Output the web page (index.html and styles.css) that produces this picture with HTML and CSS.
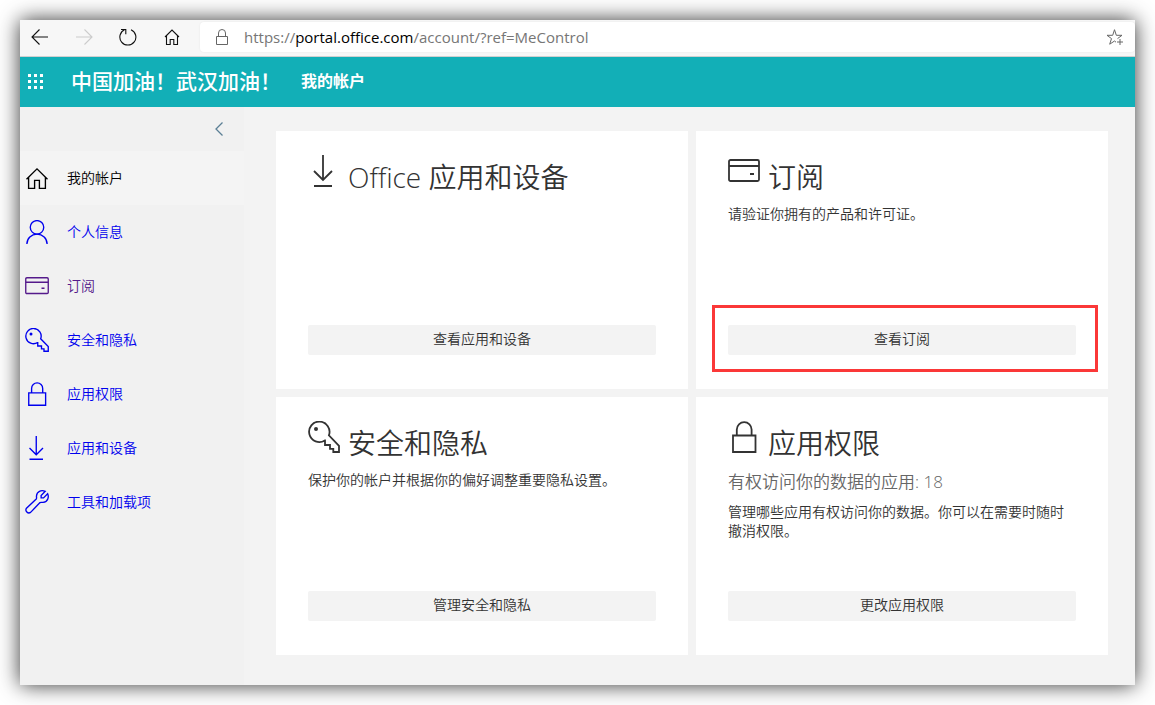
FILE: index.html
```html
<!DOCTYPE html>
<html lang="zh-CN">
<head>
<meta charset="utf-8">
<meta name="viewport" content="width=device-width, initial-scale=1">
<title>我的帐户</title>
<link rel="stylesheet" href="styles.css">
</head>
<body>
<svg class="sprite" aria-hidden="true">
  <symbol id="home" viewBox="0 0 32 32"><path d="M2 17.8 16 3.8l14 14M4.8 15v14.8h8V19.2h6.4v10.6h8V15"/></symbol>
  <symbol id="person" viewBox="0 0 32 32"><circle cx="16" cy="9.8" r="9"/><path d="M2.5 32c0-7.5 6-13.2 13.5-13.2S29.500 24.500 29.500 32"/></symbol>
  <symbol id="card" viewBox="0 0 32 32"><rect x="1" y="5" width="30" height="21" rx="1.500"/><path d="M1 11h30M22 19h4"/></symbol>
  <symbol id="key" viewBox="0 0 32 32"><path d="M16.800 19.400A10.200 10.200 0 1 1 20.900 14.300L31 24.800V31H25.300V27.800H22V24H17V19.400Z"/><circle class="dot" cx="8" cy="8" r="2"/></symbol>
  <symbol id="lock" viewBox="0 0 32 32"><path d="M5 14.500h22.500V31H5zM8.800 14.500V8.500a7.400 7.400 0 0 1 14.800 0v6"/></symbol>
  <symbol id="download" viewBox="0 0 32 32"><path d="M15 0v25M6 16l9 9 9-9M6 31h18"/></symbol>
  <symbol id="wrench" viewBox="0 0 32 32"><path d="M27 1.800 21.500 7.300v3.200h3.200L30.200 5c1.800 4 .8 11-6.200 11.500-1.500.1-3-.5-4 .3L7.500 29.800A4 4 0 0 1 2 24.200L15 12c.8-1 .2-2.500.3-4C15.800 2 21.500-.5 27 1.800Z"/></symbol>
</svg>
<div class="window">
  <div class="toolbar">
    <div class="tools">
      <button class="tool" aria-label="后退"><svg viewBox="0 0 18 18"><path d="M17 9H1M8.500 1.500 1 9l7.500 7.500"/></svg></button>
      <button class="tool" aria-label="前进" disabled><svg viewBox="0 0 18 18"><path d="M1 9h16M9.500 1.500 17 9l-7.500 7.500"/></svg></button>
      <button class="tool" aria-label="刷新"><svg viewBox="0 0 18 18"><path d="M12 1.700A8 8 0 1 1 5.500 1.800M2 1.500h4.800v4.800"/></svg></button>
      <button class="tool" aria-label="主页"><svg viewBox="0 0 18 18"><path d="M2 9 9 2l7 7M3.500 7.800v8.700h3.700v-5h3.600v5h3.700V7.800"/></svg></button>
    </div>
    <div class="address">
      <svg class="address-lock" viewBox="0 0 14 18" aria-hidden="true"><path d="M1.500 8.500h11v8h-11zM3.500 8.500V5a3.500 3.500 0 0 1 7 0v3.500"/></svg>
      <div class="url" role="textbox" contenteditable="true" spellcheck="false" aria-label="地址">https://<span class="host">portal.office.com</span>/account/?ref=MeControl</div>
      <button class="favorite" aria-label="添加到收藏夹"><svg viewBox="0 0 18 18"><path d="M10 14.200 8.500 13l-4.800 3.200 1.800-5.600L1 7.300h5.700L8.500 1.700l1.800 5.600H16l-4.500 3.300M14 11v6M11 14h6"/></svg></button>
    </div>
  </div>
  <header class="header">
    <button class="waffle" aria-label="应用启动器"><svg viewBox="0 0 15 15"><path d="M0 0h3v3H0zM6 0h3v3H6zM12 0h3v3h-3zM0 6h3v3H0zM6 6h3v3H6zM12 6h3v3h-3zM0 12h3v3H0zM6 12h3v3H6zM12 12h3v3h-3z"/></svg></button>
    <span class="brand">中国加油！武汉加油！</span>
    <span class="app-name">我的帐户</span>
  </header>
  <div class="body">
    <nav class="sidebar" aria-label="帐户">
      <button class="collapse" aria-label="折叠"><svg viewBox="0 0 10 16"><path d="M8.500 1.500 2 8l6.500 6.500"/></svg></button>
      <a class="item current" href="#" aria-current="page"><svg class="icon"><use href="#home"/></svg>我的帐户</a>
      <a class="item" href="#"><svg class="icon"><use href="#person"/></svg>个人信息</a>
      <a class="item visited" href="#"><svg class="icon"><use href="#card"/></svg>订阅</a>
      <a class="item" href="#"><svg class="icon"><use href="#key"/></svg>安全和隐私</a>
      <a class="item" href="#"><svg class="icon"><use href="#lock"/></svg>应用权限</a>
      <a class="item" href="#"><svg class="icon"><use href="#download"/></svg>应用和设备</a>
      <a class="item" href="#"><svg class="icon"><use href="#wrench"/></svg>工具和加载项</a>
    </nav>
    <main class="cards">
      <section class="card">
        <h2 class="title"><svg class="icon"><use href="#download"/></svg><span><span class="latin">Office</span> 应用和设备</span></h2>
        <div class="action"><button class="action-button">查看应用和设备</button></div>
      </section>
      <section class="card">
        <h2 class="title"><svg class="icon"><use href="#card"/></svg><span>订阅</span></h2>
        <p class="text">请验证你拥有的产品和许可证。</p>
        <div class="action highlighted"><button class="action-button">查看订阅</button></div>
      </section>
      <section class="card">
        <h2 class="title"><svg class="icon"><use href="#key"/></svg><span>安全和隐私</span></h2>
        <p class="text">保护你的帐户并根据你的偏好调整重要隐私设置。</p>
        <div class="action"><button class="action-button">管理安全和隐私</button></div>
      </section>
      <section class="card">
        <h2 class="title"><svg class="icon"><use href="#lock"/></svg><span>应用权限</span></h2>
        <p class="subtitle">有权访问你的数据的应用: 18</p>
        <p class="text">管理哪些应用有权访问你的数据。你可以在需要时随时撤消权限。</p>
        <div class="action"><button class="action-button">更改应用权限</button></div>
      </section>
    </main>
  </div>
</div>
</body>
</html>
```
FILE: styles.css
```css
* { box-sizing: border-box; }

body {
  margin: 0;
  min-height: 100vh;
  padding: 20px;
  display: flex;
  background: #fff;
  color: #333;
  font: 350 14px/20px "Open Sans", "Noto Sans CJK SC", sans-serif;
}

button {
  margin: 0;
  padding: 0;
  border: 0;
  background: none;
  color: inherit;
  font: inherit;
}

svg {
  display: block;
  fill: none;
  stroke: currentColor;
}

.sprite {
  position: absolute;
  width: 0;
  height: 0;
}

.window {
  flex: 1;
  display: flex;
  flex-direction: column;
  background: #f3f3f3;
  box-shadow: 0 0 20px rgba(0, 0, 0, 0.8);
}

/* Browser toolbar */
.toolbar {
  display: flex;
  gap: 8px;
  padding: 2px 0 4px;
  background: #f7f7f7;
  border-bottom: 1px solid #d0d0d0;
}

.tools {
  display: flex;
  gap: 4px;
}

.tool {
  width: 40px;
  display: grid;
  place-items: center;
  color: #111;
}

.tool:disabled { color: #ccc; }

.tool svg {
  width: 18px;
  height: 18px;
  stroke-width: 1.1;
}

.address {
  flex: 1;
  display: flex;
  align-items: center;
  padding: 0 11px 0 15px;
  background: #fff;
  border-radius: 4px;
  box-shadow: 0 0 2px rgba(0, 0, 0, 0.08);
}

.address-lock {
  width: 14px;
  height: 18px;
  color: #666;
}

.url {
  flex: 1;
  padding-left: 15px;
  color: #767676;
  font-size: 15px;
  font-weight: 400;
  line-height: 30px;
  outline: 0;
}

.host { color: #000; }

.favorite {
  color: #666;
}

.favorite svg {
  width: 18px;
  height: 18px;
}

/* Site header */
.header {
  display: flex;
  align-items: center;
  height: 50px;
  padding: 0 8px 2px;
  background: #12afb7;
  color: #fff;
}

.waffle svg {
  width: 15px;
  height: 15px;
  fill: currentColor;
  stroke: none;
}

.brand {
  width: 230px;
  margin-left: 28px;
  font-size: 21px;
  font-weight: 500;
  white-space: nowrap;
}

.app-name {
  font-size: 16px;
  font-weight: 700;
}

.body {
  flex: 1;
  display: flex;
}

/* Sidebar */
.sidebar {
  width: 224px;
  display: flex;
  flex-direction: column;
  background: #f1f1f1;
}

.collapse {
  height: 44px;
  display: flex;
  align-items: center;
  justify-content: flex-end;
  padding-right: 20px;
  color: #5b7f95;
}

.collapse svg {
  width: 10px;
  height: 16px;
  stroke-width: 1.3;
}

.item {
  display: flex;
  align-items: center;
  gap: 18px;
  height: 54px;
  padding: 0 5px;
  color: #00e;
  text-decoration: none;
}

.item .icon {
  width: 24px;
  height: 24px;
}

.icon {
  flex: none;
  overflow: visible;
  stroke-width: 1.8;
}

.dot {
  fill: currentColor;
  stroke: none;
}

.current {
  background: #f4f4f4;
  color: #000;
}

.visited { color: #551a8b; }

/* Cards */
.cards {
  flex: 1;
  display: grid;
  grid-template-columns: 1fr 1fr;
  grid-auto-rows: minmax(258px, auto);
  align-content: start;
  gap: 8px;
  padding: 24px 27px 30px 32px;
}

.card {
  display: flex;
  flex-direction: column;
  padding: 24px 32px 34px;
  background: #fff;
}

.title {
  display: flex;
  align-items: flex-start;
  gap: 8px;
  margin: 0;
  font-size: 28px;
  font-weight: 350;
  line-height: 44px;
}

.latin { font-weight: 300; }

.title .icon {
  width: 32px;
  height: 32px;
}

.subtitle {
  margin: 5px 0 3px;
  color: #666;
  font-size: 17px;
  line-height: 24px;
}

.text {
  margin: 5px 0 0;
  line-height: 19px;
}

.action {
  position: relative;
  display: grid;
  margin-top: auto;
}

.action-button {
  height: 30px;
  padding-bottom: 2px;
  background: #f3f3f3;
  border-radius: 2px;
}

.highlighted::after {
  content: "";
  position: absolute;
  inset: -20px -22px -17px -16px;
  border: 3px solid #fb3838;
  pointer-events: none;
}
```
